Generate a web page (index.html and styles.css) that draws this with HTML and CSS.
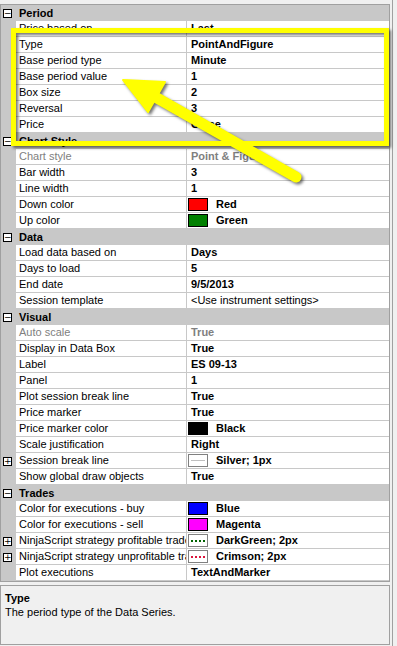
FILE: index.html
```html
<!DOCTYPE html>
<html lang="en">
<head>
    <meta charset="UTF-8">
    <title>Data Series properties</title>
    <link rel="stylesheet" href="styles.css">
</head>
<body>
    <div class="window">
        <div class="grid">
            <div class="cat"><span class="toggle">&minus;</span><span class="cat-name">Period</span></div>
            <div class="prop"><span class="gutter"></span><span class="name">Price based on</span><span class="value">Last</span></div>
            <div class="prop"><span class="gutter"></span><span class="name">Type</span><span class="value">PointAndFigure</span></div>
            <div class="prop"><span class="gutter"></span><span class="name">Base period type</span><span class="value">Minute</span></div>
            <div class="prop"><span class="gutter"></span><span class="name">Base period value</span><span class="value">1</span></div>
            <div class="prop"><span class="gutter"></span><span class="name">Box size</span><span class="value">2</span></div>
            <div class="prop"><span class="gutter"></span><span class="name">Reversal</span><span class="value">3</span></div>
            <div class="prop"><span class="gutter"></span><span class="name">Price</span><span class="value">Close</span></div>

            <div class="cat"><span class="toggle">&minus;</span><span class="cat-name">Chart Style</span></div>
            <div class="prop disabled"><span class="gutter"></span><span class="name">Chart style</span><span class="value">Point &amp; Figure</span></div>
            <div class="prop"><span class="gutter"></span><span class="name">Bar width</span><span class="value">3</span></div>
            <div class="prop"><span class="gutter"></span><span class="name">Line width</span><span class="value">1</span></div>
            <div class="prop"><span class="gutter"></span><span class="name">Down color</span><span class="value swatched"><i class="swatch red"></i>Red</span></div>
            <div class="prop"><span class="gutter"></span><span class="name">Up color</span><span class="value swatched"><i class="swatch green"></i>Green</span></div>

            <div class="cat"><span class="toggle">&minus;</span><span class="cat-name">Data</span></div>
            <div class="prop"><span class="gutter"></span><span class="name">Load data based on</span><span class="value">Days</span></div>
            <div class="prop"><span class="gutter"></span><span class="name">Days to load</span><span class="value">5</span></div>
            <div class="prop"><span class="gutter"></span><span class="name">End date</span><span class="value">9/5/2013</span></div>
            <div class="prop"><span class="gutter"></span><span class="name">Session template</span><span class="value plain">&lt;Use instrument settings&gt;</span></div>

            <div class="cat"><span class="toggle">&minus;</span><span class="cat-name">Visual</span></div>
            <div class="prop disabled"><span class="gutter"></span><span class="name">Auto scale</span><span class="value">True</span></div>
            <div class="prop"><span class="gutter"></span><span class="name">Display in Data Box</span><span class="value">True</span></div>
            <div class="prop"><span class="gutter"></span><span class="name">Label</span><span class="value">ES 09-13</span></div>
            <div class="prop"><span class="gutter"></span><span class="name">Panel</span><span class="value">1</span></div>
            <div class="prop"><span class="gutter"></span><span class="name">Plot session break line</span><span class="value">True</span></div>
            <div class="prop"><span class="gutter"></span><span class="name">Price marker</span><span class="value">True</span></div>
            <div class="prop"><span class="gutter"></span><span class="name">Price marker color</span><span class="value swatched"><i class="swatch black"></i>Black</span></div>
            <div class="prop"><span class="gutter"></span><span class="name">Scale justification</span><span class="value">Right</span></div>
            <div class="prop"><span class="gutter"><span class="toggle">+</span></span><span class="name">Session break line</span><span class="value swatched"><i class="swatch line silver"></i>Silver; 1px</span></div>
            <div class="prop"><span class="gutter"></span><span class="name">Show global draw objects</span><span class="value">True</span></div>

            <div class="cat"><span class="toggle">&minus;</span><span class="cat-name">Trades</span></div>
            <div class="prop"><span class="gutter"></span><span class="name">Color for executions - buy</span><span class="value swatched"><i class="swatch blue"></i>Blue</span></div>
            <div class="prop"><span class="gutter"></span><span class="name">Color for executions - sell</span><span class="value swatched"><i class="swatch magenta"></i>Magenta</span></div>
            <div class="prop"><span class="gutter"><span class="toggle">+</span></span><span class="name">NinjaScript strategy profitable trade</span><span class="value swatched"><i class="swatch line dotted-green"></i>DarkGreen; 2px</span></div>
            <div class="prop"><span class="gutter"><span class="toggle">+</span></span><span class="name">NinjaScript strategy unprofitable trade</span><span class="value swatched"><i class="swatch line dotted-crimson"></i>Crimson; 2px</span></div>
            <div class="prop"><span class="gutter"></span><span class="name">Plot executions</span><span class="value">TextAndMarker</span></div>
        </div>

        <div class="desc">
            <div class="desc-title">Type</div>
            <div class="desc-text">The period type of the Data Series.</div>
        </div>
    </div>

    <!-- callout drawn over the grid -->
    <svg class="callout" width="397" height="646" viewBox="0 0 397 646">
        <rect x="13.5" y="30.5" width="373" height="113" fill="none" stroke="#ffff00" stroke-width="5"/>
        <line x1="157" y1="98" x2="296" y2="177" stroke="#ffff00" stroke-width="11" stroke-linecap="round"/>
        <polygon points="123,80 165,82 148,112" fill="#ffff00" stroke="#ffff00" stroke-width="2" stroke-linejoin="round"/>
    </svg>
</body>
</html>
```

FILE: styles.css
```css
body {
    margin: 0;
    width: 397px;
    height: 646px;
    overflow: hidden;
    position: relative;
    background: #f0f0f0;
    font-family: "Liberation Sans", Arial, sans-serif;
    font-size: 11px;
    color: #000;
}

.window {
    width: 393px;
    height: 646px;
    border-right: 1px solid #a0a0a0;
    padding-top: 4px;
    box-sizing: border-box;
}

.grid {
    width: 388px;
    border: 1px solid #a0a0a0;
    background: #c8c8c8;
}

.cat,
.prop {
    display: grid;
    grid-template-columns: 15px 170px 1fr;
    height: 16px;
    line-height: 15px;
}

.cat {
    grid-template-columns: 15px 1fr;
    background: #c8c8c8;
    align-items: center;
}

.cat-name {
    font-weight: bold;
    padding-left: 3px;
    line-height: 16px;
}

.gutter {
    background: #c8c8c8;
    display: flex;
    align-items: center;
}

.toggle {
    width: 7px;
    height: 7px;
    margin-left: 2px;
    border: 1px solid #000;
    background: #fff;
    font-size: 9px;
    line-height: 6px;
    text-align: center;
    font-family: "DejaVu Sans", sans-serif;
    overflow: hidden;
}

.name,
.value {
    background: #fff;
    border-bottom: 1px solid #c8c8c8;
    white-space: nowrap;
    overflow: hidden;
}

.name {
    padding-left: 3px;
}

.value {
    border-left: 1px solid #c8c8c8;
    padding-left: 4px;
    font-weight: bold;
}

.value.plain {
    font-weight: normal;
}

.value.swatched {
    padding-left: 1px;
    display: flex;
    align-items: center;
}

.disabled .name,
.disabled .value {
    color: #808080;
}

.swatch {
    display: inline-block;
    width: 18px;
    height: 11px;
    border: 1px solid #000;
    margin-right: 8px;
    box-sizing: content-box;
}

.red { background: #ff0000; }
.green { background: #008000; }
.black { background: #000; }
.blue { background: #0000ff; }
.magenta { background: #ff00ff; }

.line {
    background: #fff;
    border-color: #808080;
}

.line::after {
    content: "";
    display: block;
    margin: 5px 2px 0;
    height: 0;
}

.silver::after { border-top: 1px solid #c0c0c0; }
.dotted-green::after { border-top: 2px dotted #006400; }
.dotted-crimson::after { border-top: 2px dotted #dc143c; }

.desc {
    width: 384px;
    height: 53px;
    margin-top: 3px;
    border: 1px solid #a0a0a0;
    padding: 5px 0 0 4px;
    background: #f0f0f0;
}

.desc-title {
    font-weight: bold;
    line-height: 14px;
}

.desc-text {
    line-height: 14px;
}

.callout {
    position: absolute;
    top: 0;
    left: 0;
    pointer-events: none;
    filter: drop-shadow(2px 2px 1.5px rgba(0, 0, 0, 0.55));
}
```
